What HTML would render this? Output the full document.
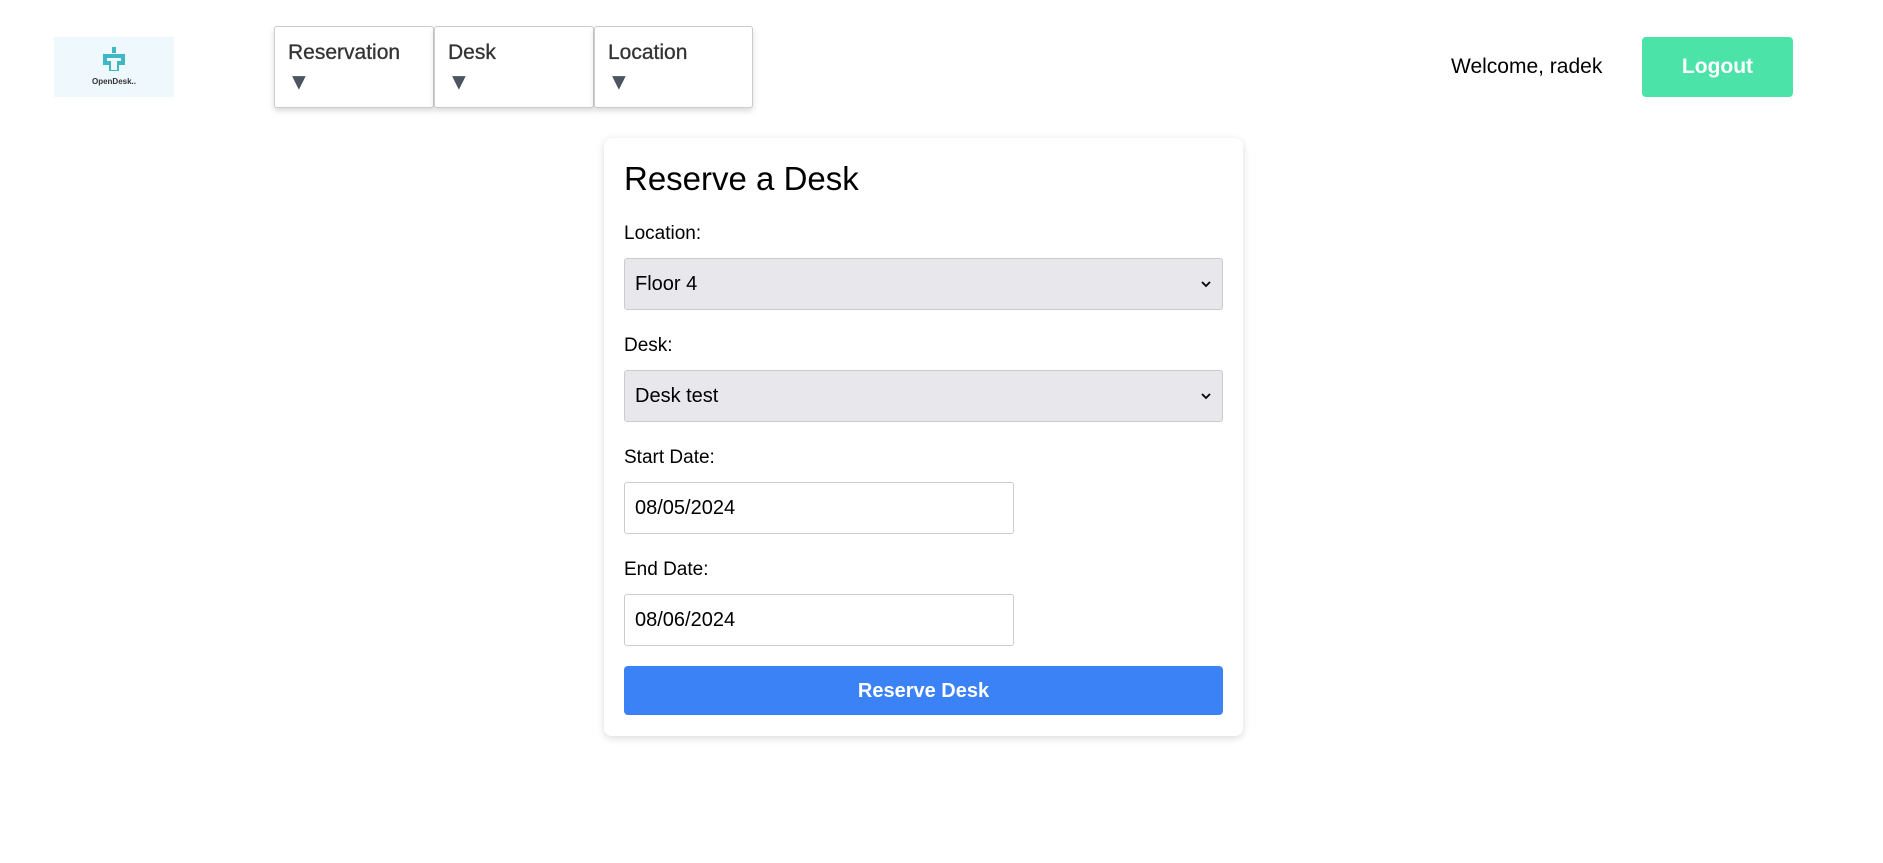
<!DOCTYPE html>
<html><head><meta charset="utf-8"><style>
*{box-sizing:border-box;margin:0;padding:0}
body{width:1883px;height:863px;background:#fff;font-family:"Liberation Sans",sans-serif;position:relative;overflow:hidden;color:#000}
.a{position:absolute}
.nav{position:absolute;top:26px;height:82px;background:#fff;border:1px solid #ccc;border-radius:3px;box-shadow:0 3px 6px rgba(0,0,0,.15);padding:13px 13px;font-size:21px;color:#333;line-height:26px;-webkit-text-stroke:0.3px #333}
.nav .t{font-size:22px;color:#4b5563;display:block;margin-top:3px}
label{position:absolute;left:624px;font-size:19px}
.sel{position:absolute;left:624px;width:599px;height:52px;background:#e8e7ec;border:1px solid #ccc;border-radius:3px;font-size:20px;padding-left:10px;line-height:50px}
.sel svg{position:absolute;right:10px;top:20px}
.inp{position:absolute;left:624px;width:390px;height:52px;background:#fff;border:1px solid #ccc;border-radius:3px;font-size:20px;padding-left:10px;line-height:50px}
</style></head><body>
<div class="a" style="left:54px;top:37px;width:120px;height:60px;background:#eef8fd">
<svg class="a" style="left:45px;top:10px" width="30" height="26" viewBox="0 0 30 26"><rect x="13" y="0" width="4" height="6" fill="#3fb8c4"/><path d="M4 7h22v11h-6v6h-10v-6h-6z" fill="#3fb8c4"/><rect x="8" y="11" width="14" height="3" fill="#eef8fd"/><rect x="12" y="14" width="6" height="9" fill="#eef8fd"/></svg>
<div class="a" style="left:0;width:120px;top:40px;text-align:center;font-size:8px;font-weight:bold;color:#333">OpenDesk..</div>
</div>
<div class="nav" style="left:274px;width:160px">Reservation<span class="t">▼</span></div>
<div class="nav" style="left:434px;width:160px">Desk<span class="t">▼</span></div>
<div class="nav" style="left:594px;width:159px">Location<span class="t">▼</span></div>
<div class="a" style="left:1451px;top:55px;font-size:21px">Welcome, radek</div>
<div class="a" style="left:1642px;top:37px;width:151px;height:60px;background:#4be3a8;border-radius:4px;color:#fff;font-weight:bold;font-size:21px;text-align:center;line-height:60px">Logout</div>
<div class="a" style="left:604px;top:138px;width:639px;height:598px;border-radius:8px;box-shadow:0 2px 8px rgba(0,0,0,.15)"></div>
<div class="a" style="left:624px;top:160px;font-size:33px">Reserve a Desk</div>
<label style="top:223px">Location:</label>
<div class="sel" style="top:258px">Floor 4<svg width="12" height="10" viewBox="0 0 12 10"><path d="M2 3l4 4 4-4" stroke="#000" stroke-width="1.8" fill="none"/></svg></div>
<label style="top:335px">Desk:</label>
<div class="sel" style="top:370px">Desk test<svg width="12" height="10" viewBox="0 0 12 10"><path d="M2 3l4 4 4-4" stroke="#000" stroke-width="1.8" fill="none"/></svg></div>
<label style="top:447px">Start Date:</label>
<div class="inp" style="top:482px">08/05/2024</div>
<label style="top:559px">End Date:</label>
<div class="inp" style="top:594px">08/06/2024</div>
<div class="a" style="left:624px;top:666px;width:599px;height:49px;background:#3b82f6;border-radius:4px;color:#fff;font-weight:bold;font-size:20px;text-align:center;line-height:50px">Reserve Desk</div>
</body></html>
